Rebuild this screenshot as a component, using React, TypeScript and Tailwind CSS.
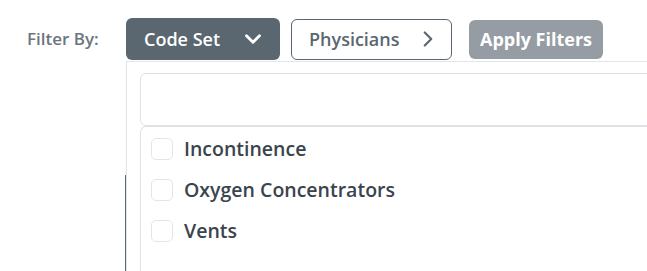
import { ChevronDown, ChevronRight } from 'lucide-react';

const items = ['Incontinence', 'Oxygen Concentrators', 'Vents'];

export default function App() {
  return (
    <div className="relative w-[647px] h-[271px] overflow-hidden bg-white font-['Open_Sans',sans-serif]">
      {/* Filter bar */}
      <div className="flex items-center pt-[18px] pl-[27px]">
        <span className="w-[99px] text-[17px] font-semibold text-[#6c757d]">Filter By:</span>
        <button
          type="button"
          className="flex items-center justify-between w-[154px] h-[42px] pl-[18px] pr-[14px] rounded-md bg-[#5b6770] text-white text-[18px] font-semibold"
        >
          Code Set
          <ChevronDown className="w-[26px] h-[26px]" strokeWidth={2.6} />
        </button>
        <button
          type="button"
          className="ml-[11px] flex items-center justify-between w-[161px] h-[41px] pl-[17px] pr-[10px] rounded-md border border-[#5b6770] bg-white text-[#5b6770] text-[18px] font-semibold"
        >
          Physicians
          <ChevronRight className="w-[26px] h-[26px]" strokeWidth={2} />
        </button>
        <button
          type="button"
          className="ml-[17px] w-[134px] h-[39px] rounded-md bg-[#959ca3] text-white text-[18px] font-bold"
        >
          Apply Filters
        </button>
      </div>

      {/* Dropdown panel */}
      <div className="ml-[126px] mt-px w-[600px] h-[300px] border-l border-t border-[#e3e6e9] pt-[11px] pl-[13px] shadow-[0_1px_2px_rgba(0,0,0,0.04)]">
        <div className="h-[53px] rounded-md border border-[#dee2e6]" />
        <div className="h-[300px] rounded-tl-md border-l border-t border-[#dee2e6] pt-px pl-[10px]">
          {items.map(item => (
            <label key={item} className="flex items-center h-[41px] gap-[11px]">
              <span className="w-[22px] h-[22px] rounded-[5px] border border-[#e3e6e9] bg-white" />
              <span className="text-[19.5px] font-semibold text-[#3a444d]">{item}</span>
            </label>
          ))}
        </div>
      </div>

      <div className="absolute left-[125px] top-[175px] w-px h-[100px] bg-[#5b6770]" />
    </div>
  );
}
